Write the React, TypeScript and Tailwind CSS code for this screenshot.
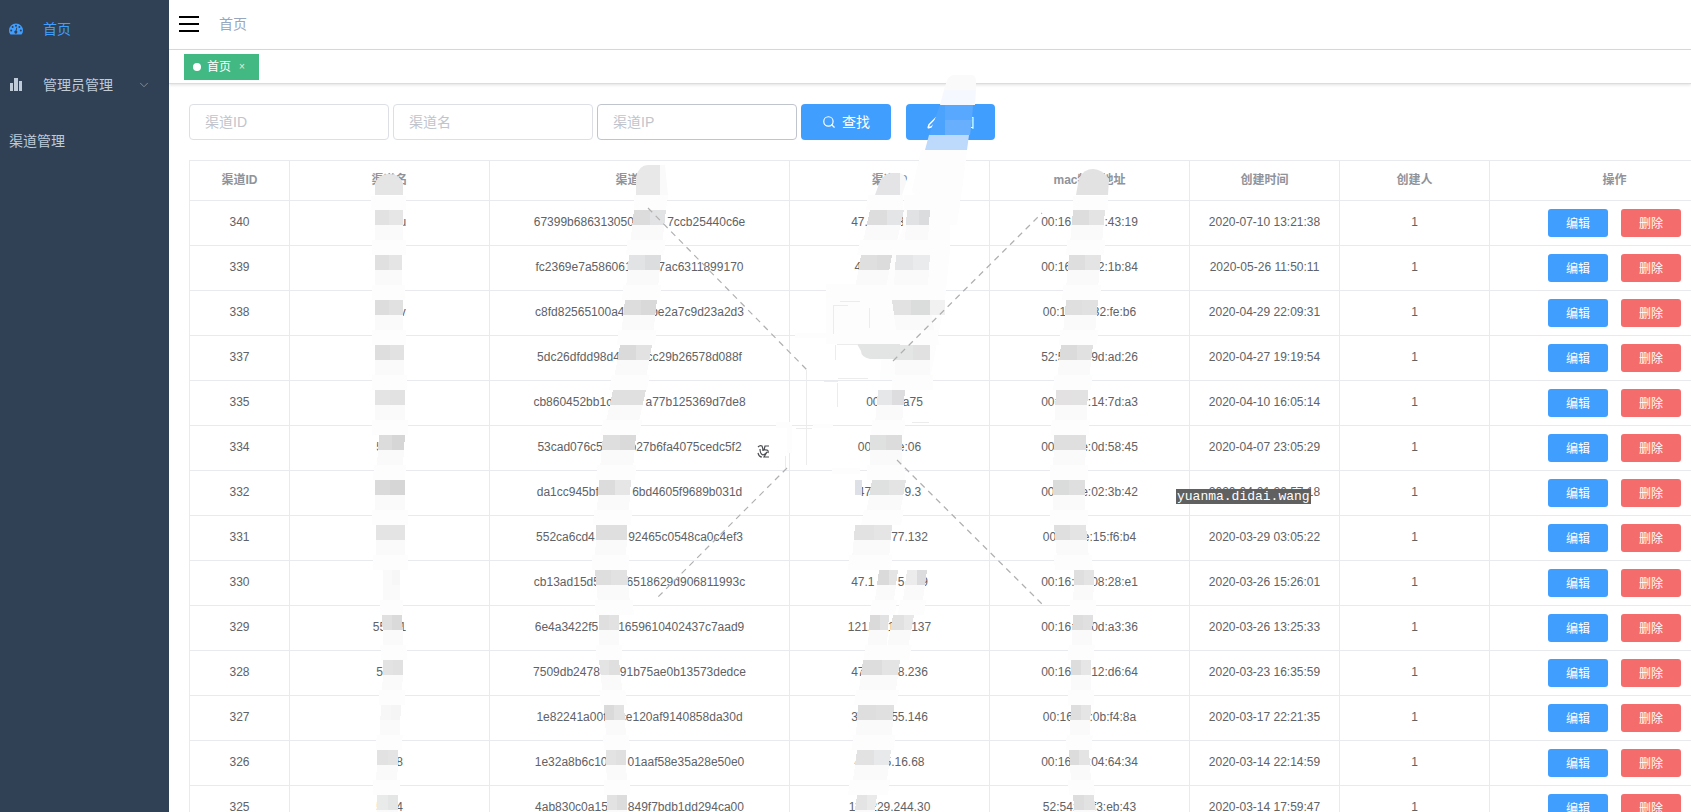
import { ChevronDown, Pencil, Search } from "lucide-react";

type Channel = {
  id: number;
  name: string;
  secret: string;
  ip: string;
  mac: string;
  created: string;
};

// "*" stands for a hidden character
const channels: Channel[] = [
  { id: 340, name: "****u", secret: "67399b686313050*****7ccb25440c6e", ip: "47.***.*3.***", mac: "00:16:**:**:43:19", created: "2020-07-10 13:21:38" },
  { id: 339, name: "", secret: "fc2369e7a586061****7ac6311899170", ip: "4*.**.1*.***", mac: "00:16:**:*2:1b:84", created: "2020-05-26 11:50:11" },
  { id: 338, name: "****v", secret: "c8fd82565100a4****be2a7c9d23a2d3", ip: "", mac: "00:1*:**:32:fe:b6", created: "2020-04-29 22:09:31" },
  { id: 337, name: "", secret: "5dc26dfdd98d4****cc29b26578d088f", ip: "", mac: "52:5*:**:9d:ad:26", created: "2020-04-27 19:19:54" },
  { id: 335, name: "", secret: "cb860452bb1c*****a77b125369d7de8", ip: "\u00a0\u00a0\u00a000:***a75", mac: "00:**:**:14:7d:a3", created: "2020-04-10 16:05:14" },
  { id: 334, name: "5***", secret: "53cad076c5****b27b6fa4075cedc5f2", ip: "00:***:e:06", mac: "00:**:*e:0d:58:45", created: "2020-04-07 23:05:29" },
  { id: 332, name: "", secret: "da1cc945bf*****6bd4605f9689b031d", ip: "47.***.*9.3", mac: "00:**:*e:02:3b:42", created: "2020-04-01 20:57:18" },
  { id: 331, name: "", secret: "552ca6cd4*****92465c0548ca0c4ef3", ip: "**.***.77.132", mac: "00:**:*e:15:f6:b4", created: "2020-03-29 03:05:22" },
  { id: 330, name: "", secret: "cb13ad15d5****6518629d906811993c", ip: "47.1**.*5.**9", mac: "00:16:**:08:28:e1", created: "2020-03-26 15:26:01" },
  { id: 329, name: "55**1", secret: "6e4a3422f5***1659610402437c7aad9", ip: "121.**.1**.137", mac: "00:16:**:0d:a3:36", created: "2020-03-26 13:25:33" },
  { id: 328, name: "5***", secret: "7509db2478***91b75ae0b13573dedce", ip: "47.***.*8.236", mac: "00:16:**:12:d6:64", created: "2020-03-23 16:35:59" },
  { id: 327, name: "", secret: "1e82241a00f**ce120af9140858da30d", ip: "3*.***.55.146", mac: "00:16:**:0b:f4:8a", created: "2020-03-17 22:21:35" },
  { id: 326, name: "***8", secret: "1e32a8b6c10***01aaf58e35a28e50e0", ip: "4*.**5.16.68", mac: "00:16:**:04:64:34", created: "2020-03-14 22:14:59" },
  { id: 325, name: "5**4", secret: "4ab830c0a15***849f7bdb1dd294ca00", ip: "111.229.244.30", mac: "52:54:**:f3:eb:43", created: "2020-03-14 17:59:47" },
];

const columns = [
  { title: "渠道ID", width: "w-[100px]" },
  { title: "渠道名", width: "w-[200px]" },
  { title: "渠道密钥", width: "w-[300px]" },
  { title: "渠道IP", width: "w-[200px]" },
  { title: "mac物理地址", width: "w-[200px]" },
  { title: "创建时间", width: "w-[150px]" },
  { title: "创建人", width: "w-[150px]" },
  { title: "操作", width: "w-[250px]" },
];

// two spaces are as wide as one digit
const blank = (text: string) => text.replaceAll("*", "\u00a0\u00a0");

// one mosaic patch: row, left, width, shift to the left per row, two tones
type Patch = [number, number, number, number, string, string];

const patches: Patch[] = [
  // channel name
  [0, 375, 28, 0, "#e2e2e2", "#e6e6e6"],
  [1, 375, 27, 0, "#e0e0e0", "#e5e5e5"],
  [2, 375, 28, 0, "#dddddd", "#e1e1e1"],
  [3, 375, 29, 0, "#dedede", "#e2e2e2"],
  [4, 375, 30, 0, "#e4e4e4", "#e2e2e2"],
  [5, 379, 26, 3, "#dcdcdc", "#d6d6d6"],
  [6, 375, 30, 0, "#dadada", "#d6d6d6"],
  [7, 376, 29, 0, "#e4e4e4", "#e4e4e4"],
  [8, 383, 17, 0, "#fafafa", "#f7f7f7"],
  [9, 382, 20, -2, "#e0e0e0", "#dadada"],
  [10, 383, 20, 1, "#e3e3e3", "#e1e1e1"],
  [11, 381, 20, 2, "#f7f7f7", "#f5f5f5"],
  [12, 377, 21, 1, "#e2e2e2", "#e4e4e4"],
  [13, 377, 21, 0, "#e9eaea", "#e4e6e6"],
  // secret
  [0, 634, 32, 5, "#dcdcdc", "#e2e3e5"],
  [1, 629, 32, 4, "#e2e3e5", "#dcdddf"],
  [2, 625, 32, 5, "#dddddd", "#d9d9d9"],
  [3, 620, 32, 8, "#dadada", "#e2e2e2"],
  [4, 613, 33, 10, "#e0e0e0", "#e0e0e0"],
  [5, 603, 33, 4, "#dedede", "#dadada"],
  [6, 599, 32, 3, "#dcdcdc", "#e6e6e6"],
  [7, 596, 31, 1, "#dfdfdf", "#dfdfdf"],
  [8, 595, 32, -4, "#dedede", "#e2e2e2"],
  [9, 599, 20, 0, "#dfdfdf", "#e2e2e2"],
  [10, 599, 20, -5, "#e4e4e4", "#dfdfdf"],
  [11, 604, 20, -3, "#dadada", "#e2e2e2"],
  [12, 606, 20, -1, "#e3e3e3", "#e0e0e0"],
  [13, 607, 20, -1, "#e2e2e2", "#dcdcdc"],
  // ip
  [0, 870, 34, 10, "#dddddd", "#e4e5e6"],
  [0, 907, 23, 3, "#e1e2e4", "#dadcde"],
  [1, 861, 31, 8, "#dfdfdf", "#dcdcdc"],
  [1, 896, 34, 3, "#e5e6e8", "#e9ebec"],
  [2, 892, 38, -6, "#e2e2e2", "#dbdcdc"],
  [3, 895, 35, 0, "#e4e6e5", "#e1e1e1"],
  [4, 878, 27, 4, "#e6e7e8", "#dddddf"],
  [5, 870, 32, 0, "#dfe1e1", "#dcdcdc"],
  [6, 872, 34, 8, "#dee1e0", "#e4e4e5"],
  [7, 855, 37, 4, "#e2e2e2", "#e5e5e5"],
  [8, 879, 19, 6, "#dadada", "#e4e4e4"],
  [8, 907, 20, 6, "#ececed", "#dcdcde"],
  [9, 870, 19, 3, "#dadada", "#e2e2e2"],
  [9, 893, 21, 8, "#e1e1e1", "#e8e8e8"],
  [10, 863, 37, 6, "#dddddd", "#e4e4e4"],
  [11, 858, 36, 3, "#dedede", "#e0e0e0"],
  [12, 857, 34, 6, "#e2e2e3", "#e8e9ea"],
  [13, 857, 20, 6, "#e4e4e4", "#eaeaea"],
  // mac
  [0, 1073, 32, 4, "#dddddd", "#e4e4e4"],
  [1, 1069, 32, 4, "#dedede", "#e4e4e4"],
  [2, 1066, 32, 4, "#dfdfdf", "#e1e1e1"],
  [3, 1061, 32, 5, "#dbdbdb", "#e1e1e1"],
  [4, 1056, 32, 2, "#e3e1e1", "#e2e2e3"],
  [5, 1054, 32, 1, "#dfdfdf", "#dfdfdf"],
  [6, 1053, 32, 0, "#dadbdb", "#dfdfdf"],
  [7, 1054, 32, -4, "#dfdfdf", "#e4e4e4"],
  [8, 1074, 20, 1, "#dfdfdf", "#e4e4e4"],
  [9, 1073, 20, 2, "#dddddd", "#e0e0e0"],
  [10, 1071, 20, 0, "#dddddd", "#e6e6e6"],
  [11, 1071, 20, 2, "#dedede", "#e5e5e5"],
  [12, 1069, 20, -3, "#dcdcdc", "#e4e4e4"],
  [13, 1073, 21, -4, "#dddddd", "#e2e2e2"],
];

function slant(x: number, y: number, w: number, shift: number) {
  return `${x},${y} ${x + w},${y} ${x + w - shift},${y + 15} ${x - shift},${y + 15}`;
}

function Mosaic({ patch }: { patch: Patch }) {
  const [row, x, w, shift, left, right] = patch;
  const y = 210 + row * 45;
  const s = shift / 3;
  const mid = x + Math.round(w / 2);
  return (
    <g>
      <polygon points={slant(x, y, w, s)} fill={left} />
      <polygon points={`${mid},${y} ${x + w},${y} ${x + w - s},${y + 15} ${mid},${y + 15}`} fill={right} />
      <polygon points={slant(x - s, y + 15, w, s)} fill="#fafafa" />
      <polygon points={slant(x - s * 2 - 3, y + 30, w + 6, s)} fill="#fdfdfd" />
    </g>
  );
}

function Overlay() {
  return (
    <svg className="pointer-events-none absolute top-0 left-0 h-full w-full" shapeRendering="crispEdges" aria-hidden="true">
      {/* pale brush strokes */}
      <g fill="#fdfdfd">
        <rect x="371" y="196" width="35" height="14" />
        <polygon points="634,195 668,195 666,210 634,210" />
        <polygon points="868,195 903,195 903,210 866,210" />
        <polygon points="904,195 950,195 950,250 945,300 930,380 880,380 886,270 903,228" />
        <rect x="1073" y="196" width="35" height="14" />
        <polygon points="921,150 967,150 962,190 957,225 930,225 912,190" />
        <rect x="795" y="333" width="60" height="5" />
        <rect x="826" y="284" width="70" height="60" />
        <rect x="787" y="425" width="5" height="28" />
        <rect x="776" y="422" width="14" height="6" />
        <rect x="813" y="424" width="20" height="4" />
        <rect x="832" y="468" width="28" height="6" />
      </g>

      {patches.map((patch, i) => (
        <Mosaic key={i} patch={patch} />
      ))}

      <g shapeRendering="auto">
        <path d="M375 195v-12q4-9 14-9t14 9v12z" fill="#e5e5e5" />
        <path d="M636 195v-18q3-12 12-12h12v30z" fill="#e8e8e9" />
        <path d="M660 165h5l3 30h-8z" fill="#fafafa" />
        <path d="M875 195l5-14q5-8 12-8h8v22z" fill="#e4e4e6" />
        <path d="M900 173q7 2 6 10l-4 12h-2z" fill="#f8f8f8" />
        <path d="M1076 195l3-17q5-9 14-9t16 10l-1 16z" fill="#e2e2e2" />
        <path d="M857 344h43v15h-30q-9-2-9-8z" fill="#e3e5e4" />
      </g>
      <rect x="930" y="300" width="15" height="15" fill="#f1f1f1" />
      <rect x="855" y="480" width="7" height="15" fill="#dde0e6" />

      {/* stroke over the add button */}
      <g shapeRendering="auto">
        <path d="M944 90l3-10q3-5 8-5h16q5 0 5 6v9z" fill="#fafafa" />
        <path d="M944 90h32l-1 15h-35z" fill="#f5f8fe" />
        <path d="M940 105h33l-3 30h-41z" fill="#4ba3fe" />
        <path d="M945 105h28l-1 15h-27z" fill="#57a8fe" />
        <path d="M945 120h27l-2 15h-25z" fill="#68b0fd" />
        <path d="M929 135h40l-2 15h-42z" fill="#bddafc" />
      </g>

      {/* faint guides */}
      <g stroke="#ececec" fill="none">
        <path d="M806.5 370v95M833.5 305v29M869.5 308v20M835.5 345v15M837.5 383v24M833 305.5h15M796 428.5h16M840 301.5h20M837 344.5h20M824 381.5h14M838 378.5h30M785.5 456v12M912 422.5h17" />
      </g>
      <g stroke="#b0b0b0" strokeWidth="1.2" strokeDasharray="6 5" fill="none" shapeRendering="auto">
        <path d="M648 208L807 370" />
        <path d="M893 361L1042 213" />
        <path d="M787 468L657 598" />
        <path d="M897 460L1044 606" />
      </g>
      <path
        d="M758 447q2-2 4-1q1 2 1 5M758 453q1 4 4 4M769 446h-4l-1 4q5-1 4 3M760 449q0 5 3 6q3-1 4-3l-3 5h5"
        stroke="#4a4c50"
        strokeWidth="1.2"
        fill="none"
        shapeRendering="auto"
      />
    </svg>
  );
}

function GaugeIcon() {
  return (
    <svg className="h-3.5 w-3.5" viewBox="0 0 14 14" aria-hidden="true">
      <path d="M7 1.5A7 7 0 0 0 0 8.500q0 2 1.100 3.600.2.300.5.300h10.800q.3 0 .5-.3Q14 10.500 14 8.500a7 7 0 0 0-7-7z" fill="#409eff" />
      <g fill="#304156">
        <circle cx="2.200" cy="8.500" r="1" />
        <circle cx="3.600" cy="5.100" r="1" />
        <circle cx="7" cy="3.700" r="1" />
        <circle cx="10.400" cy="5.100" r="1" />
        <circle cx="11.800" cy="8.500" r="1" />
        <path d="M7.400 5.600l.8.200-.6 3a1.500 1.500 0 1 1-1-.2z" />
      </g>
    </svg>
  );
}

function BarsIcon() {
  return (
    <svg className="h-3.5 w-3.5" viewBox="0 0 14 14" fill="#bfcbd9" aria-hidden="true">
      <rect x="1" y="5" width="3" height="8" />
      <rect x="5" y="0" width="4" height="13" />
      <rect x="10" y="3" width="3" height="10" />
    </svg>
  );
}

function Sidebar() {
  return (
    <nav className="w-[169px] shrink-0 bg-[#304156] pt-px text-sm text-[#bfcbd9]">
      <a href="#home" className="flex h-14 items-center gap-5 pl-[9px] text-[#409eff]">
        <GaugeIcon />
        首页
      </a>
      <a href="#admin" className="flex h-14 items-center gap-5 pl-[9px]">
        <BarsIcon />
        管理员管理
        <ChevronDown className="ml-1 h-3.5 w-3.5 text-[#909399]" strokeWidth={1.5} />
      </a>
      <a href="#channel" className="flex h-14 items-center pl-[9px]">
        渠道管理
      </a>
    </nav>
  );
}

function Field({ label, border }: { label: string; border: string }) {
  return (
    <input
      type="text"
      aria-label={label}
      placeholder={label}
      className={`h-9 w-[200px] rounded border bg-white px-[15px] text-sm text-[#606266] outline-none placeholder:text-[#c0c4cc] ${border}`}
    />
  );
}

export default function App() {
  return (
    <div className="relative flex h-screen overflow-hidden bg-white font-['Liberation_Sans','Noto_Sans_CJK_SC',sans-serif]">
      <Sidebar />

      <div className="min-w-0 flex-1">
        <header className="flex h-[50px] items-center border-b border-[#d8dce5] pb-px pl-2.5">
          <button type="button" aria-label="菜单" className="flex w-5 flex-col gap-[5px]">
            <span className="h-0.5 bg-black" />
            <span className="h-0.5 bg-black" />
            <span className="h-0.5 bg-black" />
          </button>
          <a href="#home" className="ml-5 text-sm text-[#97a8be]">
            首页
          </a>
        </header>

        <div className="flex h-[34px] items-center border-b border-[#d8dce5] pl-[15px] shadow-[0_1px_3px_0_rgba(0,0,0,0.12)]">
          <div className="flex h-[26px] w-[75px] items-center bg-[#42b983] pl-[9px] text-xs text-white">
            <span className="mr-1.5 h-2 w-2 rounded-full bg-white" />
            首页
            <button type="button" aria-label="关闭" className="ml-2 text-[10px] text-white/80">
              ×
            </button>
          </div>
        </div>

        <main className="overflow-hidden pt-5 pl-5">
          <form className="mb-5 flex gap-1">
            <Field label="渠道ID" border="border-[#dcdfe6]" />
            <Field label="渠道名" border="border-[#dcdfe6]" />
            <Field label="渠道IP" border="border-[#c0c4cc]" />
            <button type="button" className="flex h-9 w-[90px] items-center justify-center gap-1.5 rounded bg-[#409eff] text-sm text-white">
              <Search className="h-3.5 w-3.5" />
              查找
            </button>
            <button type="button" className="ml-[11px] flex h-9 w-[89px] items-center justify-center gap-1.5 rounded bg-[#409eff] text-sm text-white">
              <Pencil className="h-3.5 w-3.5" strokeWidth={2.5} />
              添加
            </button>
          </form>

          <table className="w-[1550px] table-fixed border-collapse text-center text-xs text-[#606266]">
            <thead>
              <tr className="h-10 text-[#909399]">
                {columns.map((column) => (
                  <th key={column.title} className={`border border-[#e8eaee] p-0 pb-0.5 font-bold ${column.width}`}>
                    {column.title}
                  </th>
                ))}
              </tr>
            </thead>
            <tbody>
              {channels.map((channel) => (
                <tr key={channel.id} className="h-[45px]">
                  <td className="border border-[#e8eaee] p-0 pb-0.5">{channel.id}</td>
                  <td className="border border-[#e8eaee] p-0 pb-0.5">{blank(channel.name)}</td>
                  <td className="border border-[#e8eaee] p-0 pb-0.5">{blank(channel.secret)}</td>
                  <td className="border border-[#e8eaee] p-0 pb-0.5">{blank(channel.ip)}</td>
                  <td className="border border-[#e8eaee] p-0 pb-0.5">{blank(channel.mac)}</td>
                  <td className="border border-[#e8eaee] p-0 pb-0.5">{channel.created}</td>
                  <td className="border border-[#e8eaee] p-0 pb-0.5">1</td>
                  <td className="border border-[#e8eaee] p-0">
                    <div className="flex justify-center gap-[13px]">
                      <button type="button" className="h-7 w-[60px] rounded-[3px] bg-[#409eff] pt-0.5 text-white">
                        编辑
                      </button>
                      <button type="button" className="h-7 w-[60px] rounded-[3px] bg-[#f56c6c] pt-0.5 text-white">
                        删除
                      </button>
                    </div>
                  </td>
                </tr>
              ))}
            </tbody>
          </table>
        </main>
      </div>

      <Overlay />
      <span className="absolute top-[489px] left-[1176px] bg-[#606060] px-px font-['Liberation_Mono',monospace] text-[13px] leading-[15px] text-white">
        yuanma.didai.wang
      </span>
    </div>
  );
}
